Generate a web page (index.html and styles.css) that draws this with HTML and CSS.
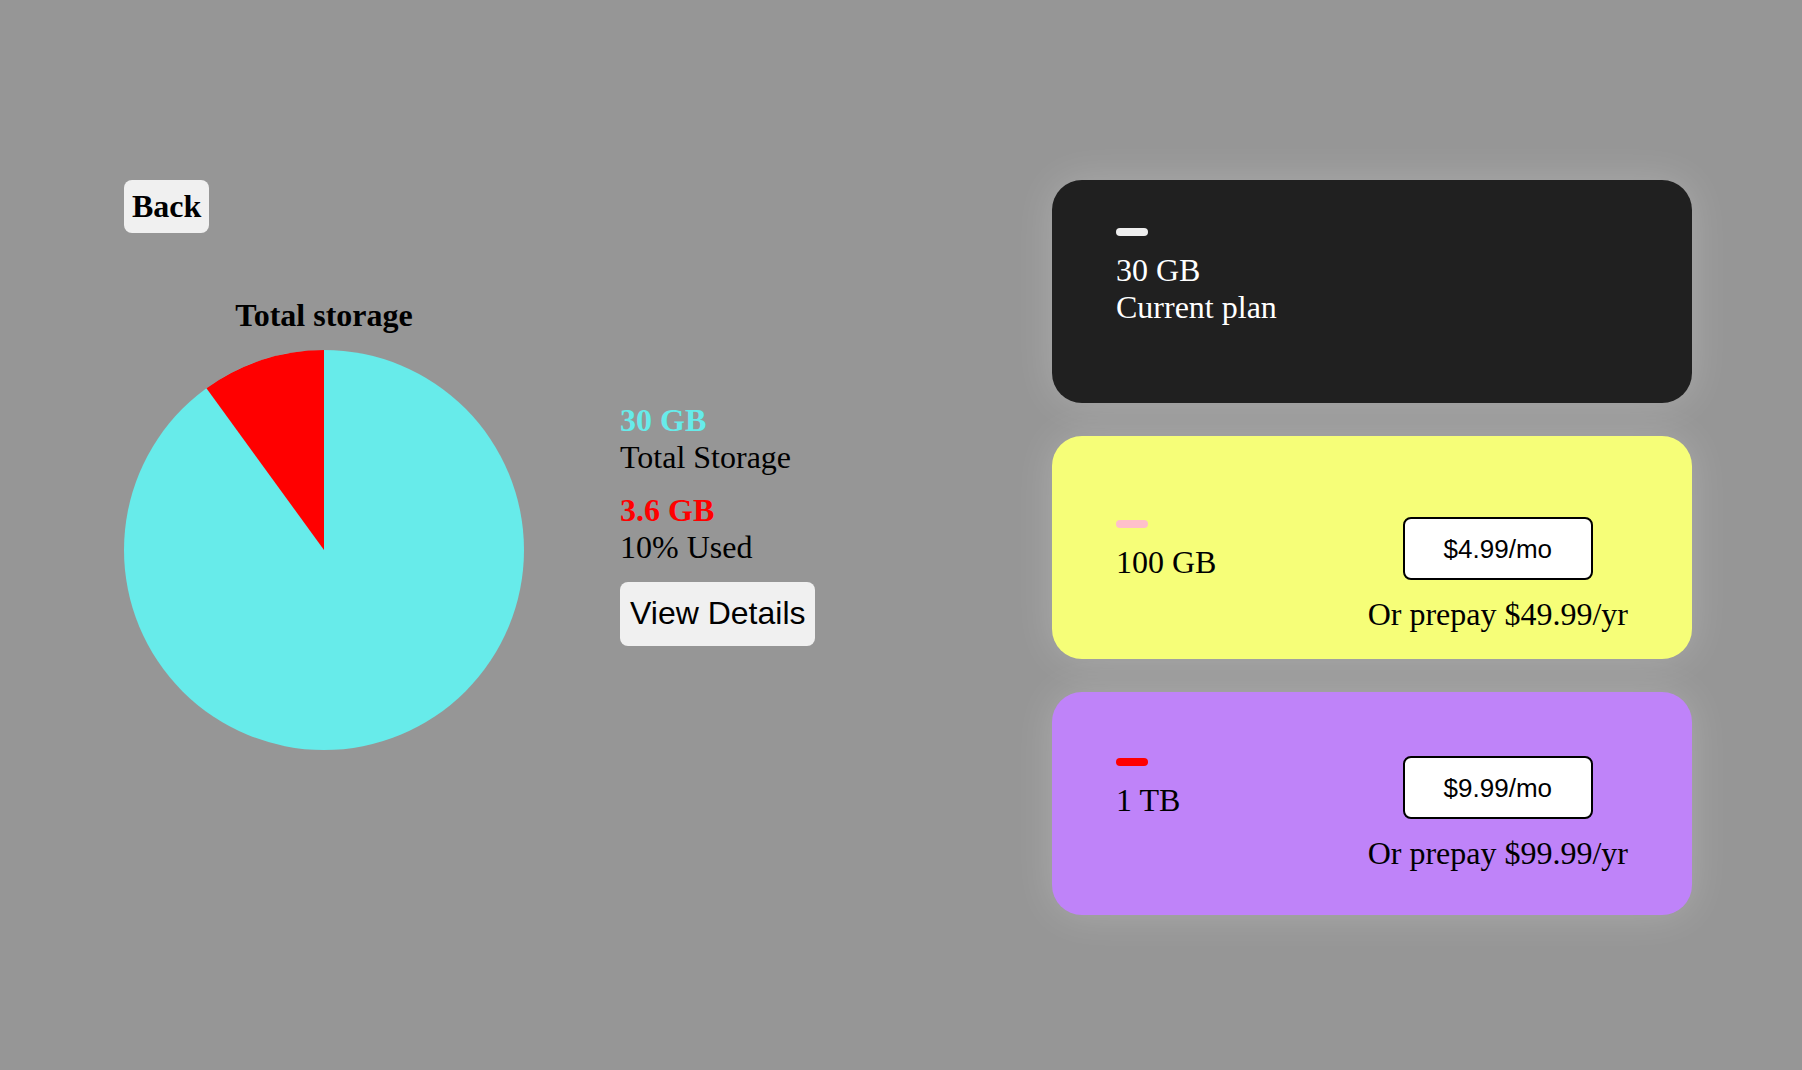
FILE: index.html
```html
<!DOCTYPE html>
<html lang="en">
<head>
<meta charset="utf-8">
<title>Storage</title>
<link rel="stylesheet" href="styles.css">
</head>
<body>
<div class="page">
  <section class="usage">
    <button class="back-btn">Back</button>
    <div class="chart-row">
      <div class="chart-col">
        <h2 class="chart-title">Total storage</h2>
        <svg class="pie" width="400" height="400" viewBox="0 0 400 400">
          <circle cx="200" cy="200" r="200" fill="#67ebea"/>
          <path d="M200 200 L200 0 A200 200 0 0 0 82.44 38.2 Z" fill="#ff0000"/>
        </svg>
      </div>
      <div class="stats">
        <div class="stat">
          <div class="stat-value total">30 GB</div>
          <div class="stat-label">Total Storage</div>
        </div>
        <div class="stat">
          <div class="stat-value used">3.6 GB</div>
          <div class="stat-label">10% Used</div>
        </div>
        <button class="details-btn">View Details</button>
      </div>
    </div>
  </section>

  <section class="plans">
    <div class="plan plan-current">
      <div class="plan-info">
        <span class="plan-dash dash-white"></span>
        <div class="plan-name">30 GB</div>
        <div class="plan-name">Current plan</div>
      </div>
    </div>
    <div class="plan plan-yellow">
      <div class="plan-info shift-3">
        <span class="plan-dash dash-pink"></span>
        <div class="plan-name">100 GB</div>
      </div>
      <div class="plan-price">
        <button class="price-btn">$4.99/mo</button>
        <div class="prepay">Or prepay $49.99/yr</div>
      </div>
    </div>
    <div class="plan plan-purple">
      <div class="plan-info shift-2">
        <span class="plan-dash dash-red"></span>
        <div class="plan-name">1 TB</div>
      </div>
      <div class="plan-price">
        <button class="price-btn">$9.99/mo</button>
        <div class="prepay">Or prepay $99.99/yr</div>
      </div>
    </div>
  </section>
</div>
</body>
</html>
```

FILE: styles.css
```css
html, body {
  margin: 0;
  padding: 0;
}

body {
  background: #969696;
  font-family: "Liberation Serif", "Times New Roman", serif;
  font-size: 32px;
  color: #000;
  min-height: 1070px;
}

.page {
  display: flex;
  justify-content: space-between;
  align-items: flex-start;
  padding: 180px 110px 0 124px;
}

.usage {
  display: flex;
  flex-direction: column;
  align-items: flex-start;
}

.back-btn {
  font-family: "Liberation Serif", "Times New Roman", serif;
  font-size: 32px;
  font-weight: bold;
  line-height: normal;
  color: #000;
  background: #f0f0f0;
  border: none;
  border-radius: 8px;
  padding: 8px 8px;
  margin: 0;
}

.chart-row {
  display: flex;
  align-items: center;
  gap: 96px;
  margin-top: 64px;
}

.chart-col {
  display: flex;
  flex-direction: column;
  align-items: center;
  width: 400px;
}

.chart-title {
  font-size: 32px;
  font-weight: bold;
  line-height: normal;
  margin: 0 0 16px;
}

.pie {
  display: block;
}

.stats {
  display: flex;
  flex-direction: column;
  align-items: flex-start;
  gap: 16px;
}

.stat-value {
  font-weight: bold;
}

.stat-value.total {
  color: #67ebea;
}

.stat-value.used {
  color: #ff0000;
}

.details-btn {
  font-family: "Liberation Sans", Arial, sans-serif;
  font-size: 32px;
  line-height: normal;
  color: #000;
  background: #f0f0f0;
  border: none;
  border-radius: 8px;
  padding: 13.5px 10px;
  margin: 0;
}

.plans {
  display: flex;
  flex-direction: column;
  gap: 33px;
  width: 640px;
}

.plan {
  box-sizing: border-box;
  height: 223px;
  border-radius: 30px;
  padding: 48px 64px 0;
  display: flex;
  justify-content: space-between;
  align-items: flex-start;
  box-shadow: 0 0 40px rgba(255, 255, 255, 0.2);
}

.plan-current {
  background: #202020;
  color: #fff;
}

.plan-yellow {
  background: #f6fe78;
  padding-top: 81px;
}

.plan-purple {
  background: #bf83f9;
  padding-top: 64px;
}

.plan-info {
  display: flex;
  flex-direction: column;
  align-items: flex-start;
}

.shift-3 {
  margin-top: 3px;
}

.shift-2 {
  margin-top: 2px;
}

.plan-dash {
  display: block;
  width: 32px;
  height: 8px;
  border-radius: 4px;
  margin-bottom: 16px;
}

.dash-white {
  background: #eeeeee;
}

.dash-pink {
  background: #ffc0cb;
}

.dash-red {
  background: #ff0000;
}

.plan-price {
  display: flex;
  flex-direction: column;
  align-items: center;
  gap: 16px;
}

.price-btn {
  font-family: "Liberation Sans", Arial, sans-serif;
  font-size: 26px;
  line-height: 30px;
  color: #000;
  background: #fff;
  border: 2px solid #000;
  border-radius: 8px;
  width: 190px;
  padding: 14.5px 0;
  margin: 0;
}

.prepay {
  white-space: nowrap;
}
```
